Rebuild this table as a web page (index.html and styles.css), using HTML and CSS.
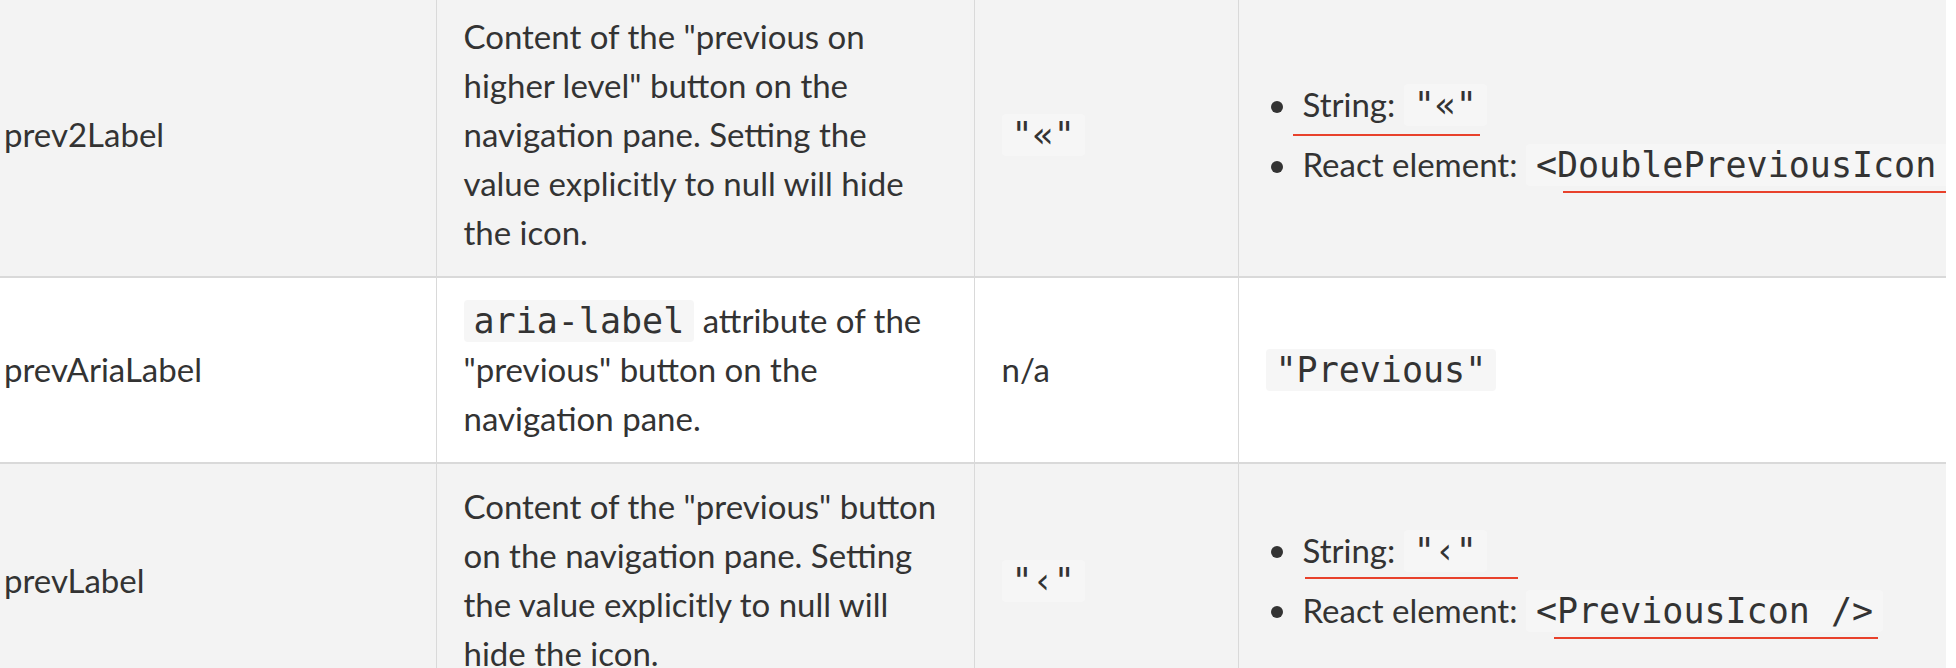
FILE: index.html
```html
<!DOCTYPE html>
<html lang="en">
<head>
<meta charset="utf-8">
<title>Calendar props</title>
<link rel="stylesheet" href="styles.css">
</head>
<body>
<div class="wrap">
  <table class="props">
    <colgroup>
      <col class="c-name">
      <col class="c-desc">
      <col class="c-def">
      <col class="c-ex">
    </colgroup>
    <tbody>
      <tr class="alt">
        <td>prev2Label</td>
        <td>Content of the "previous on higher level" button on the navigation pane. Setting the value explicitly to null will hide the icon.</td>
        <td><code>"«"</code></td>
        <td>
          <ul class="ex">
            <li>String: <code>"«"</code><span class="mark m1"></span></li>
            <li>React element: <code>&lt;DoublePreviousIcon /&gt;</code><span class="mark m2"></span></li>
          </ul>
        </td>
      </tr>
      <tr>
        <td>prevAriaLabel</td>
        <td><code>aria-label</code> attribute of the "previous" button on the navigation pane.</td>
        <td>n/a</td>
        <td><code>"Previous"</code></td>
      </tr>
      <tr class="alt">
        <td>prevLabel</td>
        <td>Content of the "previous" button on the navigation pane. Setting the value explicitly to null will hide the icon.</td>
        <td><code>"‹"</code></td>
        <td>
          <ul class="ex">
            <li>String: <code>"‹"</code><span class="mark m3"></span></li>
            <li>React element: <code>&lt;PreviousIcon /&gt;</code><span class="mark m4"></span></li>
          </ul>
        </td>
      </tr>
    </tbody>
  </table>
</div>
</body>
</html>
```
FILE: styles.css
```css
html, body {
  margin: 0;
  padding: 0;
  background: #ffffff;
}

body {
  font-family: Lato, "Liberation Sans", sans-serif;
  font-size: 33px;
  line-height: 49px;
  color: #333333;
}

.wrap {
  width: 1946px;
  overflow: hidden;
  margin-top: -6px;
}

.props {
  border-collapse: collapse;
  table-layout: fixed;
  width: 2062px;
  margin-left: -24px;
}

.c-name { width: 460px; }
.c-desc { width: 538px; }
.c-def  { width: 264px; }
.c-ex   { width: 800px; }

.props tr {
  background: #ffffff;
  border-bottom: 2px solid #d9d9d9;
}

.props tr.alt {
  background: #f3f3f3;
}

.props td {
  padding: 18px 30px 19px 27px;
  vertical-align: middle;
  border-right: 1px solid #d9d9d9;
}

.props td:first-child {
  padding-left: 28px;
}

code {
  font-family: "DejaVu Sans Mono", "Liberation Mono", monospace;
  font-size: 35px;
  line-height: 40px;
  background: #f6f6f6;
  border-radius: 4px;
  padding: 1px 10px;
  color: #333333;
}

.ex {
  list-style: none;
  margin: 0;
  padding: 0;
}

.ex li {
  position: relative;
  padding-left: 37px;
  white-space: nowrap;
}

.ex li + li {
  margin-top: 11px;
}

.ex li::before {
  content: "";
  display: inline-block;
  width: 12px;
  height: 12px;
  border-radius: 50%;
  background: #333333;
  margin-left: -32px;
  margin-right: 20px;
  vertical-align: 4.5px;
}

.mark {
  position: absolute;
  height: 2px;
  background: #e8412b;
}

.m1 { left: 27px; top: 54px; width: 187px; }
.m2 { left: 297px; top: 51px; width: 600px; }
.m3 { left: 39px; top: 51px; width: 213px; }
.m4 { left: 288px; top: 51px; width: 324px; }
```
